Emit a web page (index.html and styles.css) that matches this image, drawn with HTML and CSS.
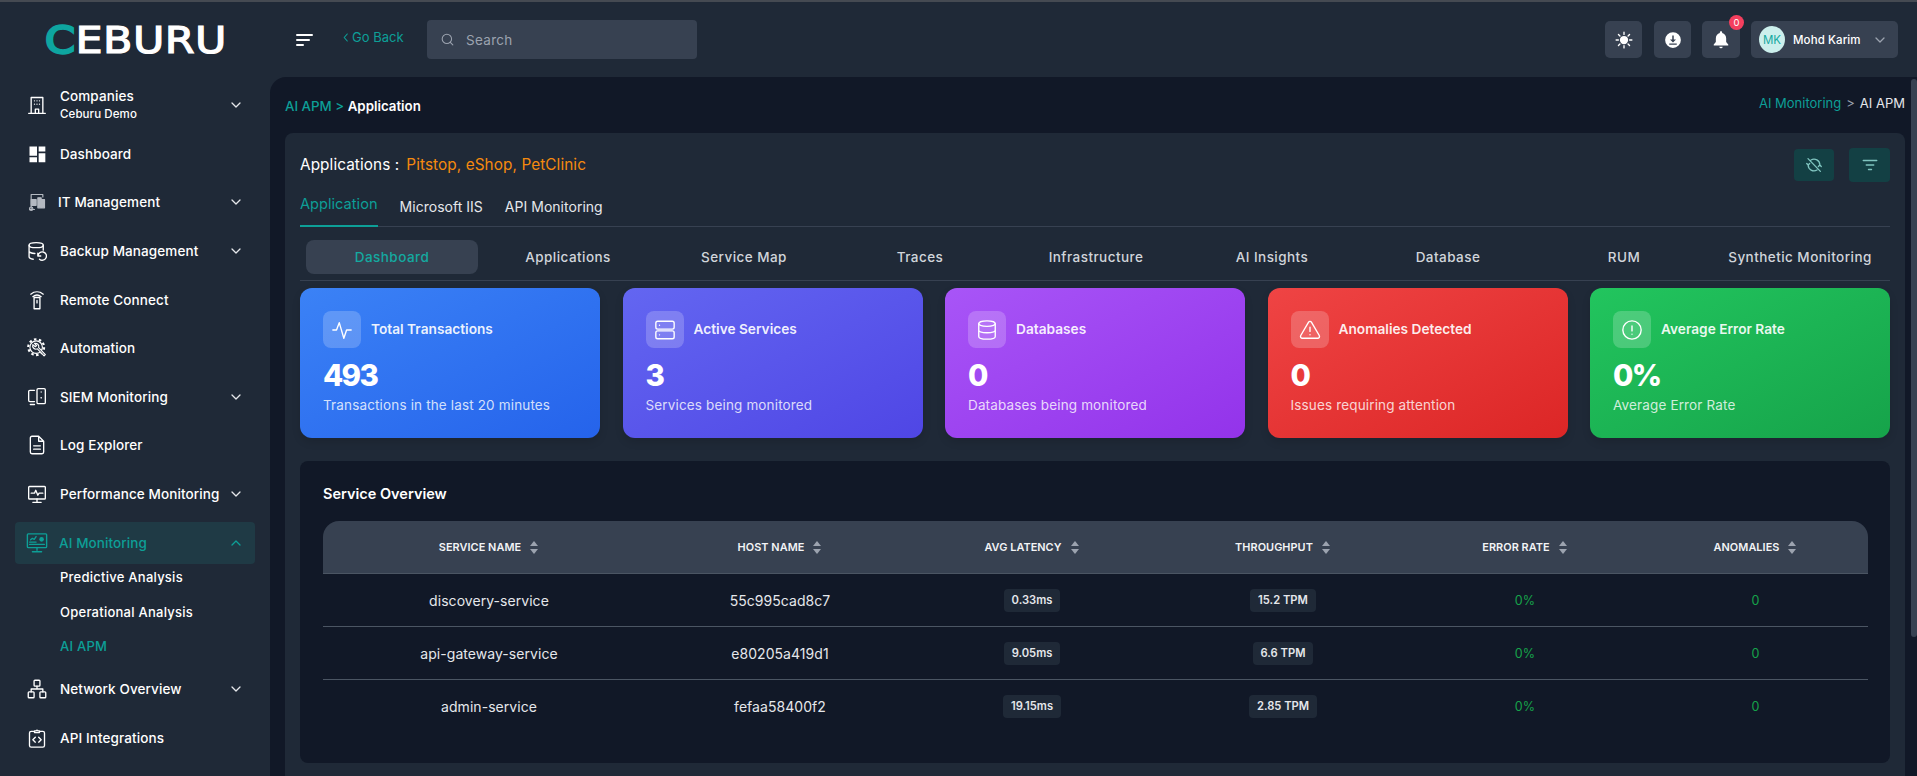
FILE: index.html
```html
<!DOCTYPE html>
<html lang="en">
<head>
<meta charset="utf-8">
<title>AI APM - Application</title>
<link rel="stylesheet" href="styles.css">
</head>
<body>
<div class="app">
  <header class="topbar">
    <div class="logo-cell"><span class="logo"><span class="logo-c">C</span>EBURU</span></div>
    <button class="burger" aria-label="Menu"><i class="b1"></i><i class="b2"></i><i class="b3"></i></button>
    <a class="goback"><svg class="goback-ic" viewBox="0 0 8 12"><path d="M6 2 2.5 6 6 10"/></svg>Go Back</a>
    <div class="search">
      <svg class="search-ic" viewBox="0 0 24 24"><circle cx="11" cy="11" r="7.5"/><path d="m20.5 20.5-4-4"/></svg>
      <span>Search</span>
    </div>
    <div class="top-actions">
      <button class="tbtn tbtn-sun" aria-label="Theme"><svg viewBox="0 0 24 24" class="ic-sun"><circle cx="12" cy="12" r="5.500" class="fill"/><path d="M12 1.500v3M12 19.500v3M1.500 12h3M19.500 12h3M4.600 4.600l2 2M17.400 17.400l2 2M4.600 19.400l2-2M17.400 6.600l2-2"/></svg></button>
      <button class="tbtn" aria-label="Download"><svg viewBox="0 0 24 24"><path class="fill" fill-rule="evenodd" d="M12 1.500a10.500 10.500 0 1 0 0 21 10.500 10.500 0 0 0 0-21Zm-1 4.500h2v5.300h3l-4 4-4-4h3V6ZM7 16.500h10v1.800H7v-1.800Z"/></svg></button>
      <div class="bell-wrap">
        <button class="tbtn tbtn-bell" aria-label="Notifications"><svg viewBox="0 0 24 24"><path class="fill" d="M12 1.500c.8 0 1.400.6 1.400 1.400v.7c3 .7 4.800 3.300 4.800 6.200v4.700l2.500 3v1H3.300v-1l2.500-3V9.800c0-2.900 1.800-5.500 4.800-6.200v-.7c0-.8.6-1.400 1.400-1.400Zm-2 18.500h4a2 2 0 0 1-4 0Z"/></svg></button>
        <span class="badge">0</span>
      </div>
      <div class="user">
        <span class="avatar">MK</span>
        <span class="uname">Mohd Karim</span>
        <svg class="chev chev-user" viewBox="0 0 12 12"><path d="m2 4 4 4 4-4"/></svg>
      </div>
    </div>
  </header>

  <aside class="sidebar">
    <nav class="nav">
      <a class="item">
        <svg class="nic" viewBox="0 0 24 24"><path d="M5 22V3h14v19M2 22h20M10 22v-5h4v5M9 7h.01M12 7h.01M15 7h.01M9 11h.01M12 11h.01M15 11h.01"/></svg>
        <span class="label label-two"><span>Companies</span><small>Ceburu Demo</small></span>
        <svg class="chev" viewBox="0 0 12 12"><path d="m2 4 4 4 4-4"/></svg>
      </a>
      <a class="item">
        <svg class="nic nic-fill" viewBox="0 0 24 24"><path d="M3 3h9v11H3zM14 3h8v6h-8zM14 11h8v11h-8zM3 16h9v6H3z"/></svg>
        <span class="label">Dashboard</span>
      </a>
      <a class="item item-tight">
        <svg class="nic nic-it" viewBox="0 0 24 24"><path d="M5 20V3h14v3M3 21h6"/><path class="nic-it-f" d="M5 9h6v7H5zM13 7h4v12h-4zM18 9h3v10h-3z"/><circle cx="5" cy="20" r="2"/></svg>
        <span class="label">IT Management</span>
        <svg class="chev" viewBox="0 0 12 12"><path d="m2 4 4 4 4-4"/></svg>
      </a>
      <a class="item">
        <svg class="nic" viewBox="0 0 24 24"><ellipse cx="11" cy="5" rx="8.500" ry="3"/><path d="M2.500 5v14c0 1.500 2.500 2.600 5 2.900M19.500 5v6M2.500 12c0 1.500 3 3 7 3"/><path d="M13 14.500v3.500h3.500M13.300 18a5 5 0 1 1 1.700 3.800"/></svg>
        <span class="label">Backup Management</span>
        <svg class="chev" viewBox="0 0 12 12"><path d="m2 4 4 4 4-4"/></svg>
      </a>
      <a class="item">
        <svg class="nic" viewBox="0 0 24 24"><rect x="8.500" y="9" width="7" height="13.500"/><path d="M12 12.500v3M4.500 5c4.500-3.600 10.500-3.600 15 0M7 8c3-2.400 7-2.400 10 0"/></svg>
        <span class="label">Remote Connect</span>
      </a>
      <a class="item">
        <svg class="nic" viewBox="0 0 24 24"><circle class="gear-teeth" cx="11" cy="11" r="9.500"/><circle class="gear-ring" cx="11" cy="11" r="7.500"/><path class="wrench" d="M7 8a4 4 0 0 0 5.500 5l8 8.500 1.500-1.500-8-8.500a4 4 0 0 0-5-5l2.500 2.500-1.500 1.500z"/></svg>
        <span class="label">Automation</span>
      </a>
      <a class="item">
        <svg class="nic" viewBox="0 0 24 24"><path d="M9 4H3.500A1.500 1.500 0 0 0 2 5.500V16a1.500 1.500 0 0 0 1.500 1.500H9M4 21h5"/><rect x="12" y="2" width="10" height="18" rx="1.500"/><path d="M17 6h.01"/><circle cx="17" cy="13" r="1" class="fill"/></svg>
        <span class="label">SIEM Monitoring</span>
        <svg class="chev" viewBox="0 0 12 12"><path d="m2 4 4 4 4-4"/></svg>
      </a>
      <a class="item">
        <svg class="nic" viewBox="0 0 24 24"><path d="M14 1.500H6A2 2 0 0 0 4 3.500v17a2 2 0 0 0 2 2h12a2 2 0 0 0 2-2V7.500zM14 1.500v6h6M8 13h8M8 17h8"/></svg>
        <span class="label">Log Explorer</span>
      </a>
      <a class="item">
        <svg class="nic" viewBox="0 0 24 24"><rect x="2" y="3" width="20" height="15" rx="1"/><path d="M5 11h4l1.500-3.500 2.500 6 1.500-2.500H19M12 18v4M7 22h10"/></svg>
        <span class="label">Performance Monitoring</span>
        <svg class="chev" viewBox="0 0 12 12"><path d="m2 4 4 4 4-4"/></svg>
      </a>
      <a class="item item-active">
        <span class="item-pill">
          <svg class="nic nic-ai" viewBox="0 0 24 24"><rect x="1.500" y="2" width="21" height="15" rx="1"/><path d="M4 13.500h16M4 11h7M5 8.500l2-1.500 2 1 2-3"/><circle cx="17" cy="8" r="2.500" class="fill"/><path d="M12 17v3M7 21.500h10"/></svg>
          <span class="label">AI Monitoring</span>
          <svg class="chev" viewBox="0 0 12 12"><path d="m2 8 4-4 4 4"/></svg>
        </span>
      </a>
      <div class="sub">
        <a class="sub-item">Predictive Analysis</a>
        <a class="sub-item">Operational Analysis</a>
        <a class="sub-item sub-on">AI APM</a>
      </div>
      <a class="item">
        <svg class="nic" viewBox="0 0 24 24"><rect x="8.500" y="1.500" width="7" height="7" rx="1"/><rect x="1.500" y="15.500" width="7" height="7" rx="1"/><rect x="15.500" y="15.500" width="7" height="7" rx="1"/><path d="M12 8.500V12M5 15.500V12h14v3.500"/></svg>
        <span class="label">Network Overview</span>
        <svg class="chev" viewBox="0 0 12 12"><path d="m2 4 4 4 4-4"/></svg>
      </a>
      <a class="item">
        <svg class="nic" viewBox="0 0 24 24"><path d="M8 4H5a2 2 0 0 0-2 2v15a2 2 0 0 0 2 2h14a2 2 0 0 0 2-2V6a2 2 0 0 0-2-2h-3M9 5.500V3.500h2a1 1 0 0 1 2 0h2v2zM10 11l-3 3 3 3M14 11l3 3-3 3"/></svg>
        <span class="label">API Integrations</span>
      </a>
    </nav>
  </aside>

  <main class="main">
    <div class="crumbs">
      <div class="crumb-left"><span class="teal">AI APM</span> <span class="teal">&gt;</span> <b>Application</b></div>
      <div class="crumb-right"><span class="teal">AI Monitoring</span><span class="crumb-sep">&gt;</span><span>AI APM</span></div>
    </div>

    <section class="card">
      <div class="card-head">
        <h1 class="apps">Applications :<span class="apps-list">Pitstop, eShop, PetClinic</span></h1>
        <div class="head-btns">
          <button class="hbtn" aria-label="Sync off"><svg viewBox="0 0 24 24"><path d="M4 3.500l16.500 17M19.800 12A7.800 7.800 0 0 0 8 5.300M4.200 12A7.800 7.800 0 0 0 16 18.700M2.300 10l1.900 2 2-2M21.700 14l-1.900-2-2 2"/></svg></button>
          <button class="hbtn hbtn-filter" aria-label="Filter"><svg viewBox="0 0 24 24"><path d="M3 6h18M7 12h10M10 18h4"/></svg></button>
        </div>
      </div>

      <div class="tabs">
        <a class="tab tab-on">Application</a>
        <a class="tab">Microsoft IIS</a>
        <a class="tab">API Monitoring</a>
      </div>

      <div class="subtabs">
        <a class="stab stab-on">Dashboard</a>
        <a class="stab">Applications</a>
        <a class="stab">Service Map</a>
        <a class="stab">Traces</a>
        <a class="stab">Infrastructure</a>
        <a class="stab">AI Insights</a>
        <a class="stab">Database</a>
        <a class="stab">RUM</a>
        <a class="stab">Synthetic Monitoring</a>
      </div>

      <div class="stats">
        <article class="stat stat-blue">
          <div class="stat-top"><span class="stat-ic"><svg viewBox="0 0 24 24"><path d="M2 12h4l3-8 5 17 3-9h5"/></svg></span><h3>Total Transactions</h3></div>
          <div class="stat-num">493</div>
          <p>Transactions in the last 20 minutes</p>
        </article>
        <article class="stat stat-indigo">
          <div class="stat-top"><span class="stat-ic"><svg viewBox="0 0 24 24"><rect x="2" y="2.500" width="20" height="8.500" rx="2"/><rect x="2" y="13" width="20" height="8.500" rx="2"/><path d="M6 6.750h.01M6 17.250h.01"/></svg></span><h3>Active Services</h3></div>
          <div class="stat-num">3</div>
          <p>Services being monitored</p>
        </article>
        <article class="stat stat-purple">
          <div class="stat-top"><span class="stat-ic"><svg viewBox="0 0 24 24"><ellipse cx="12" cy="5" rx="9" ry="3"/><path d="M3 5v14c0 1.700 4 3 9 3s9-1.300 9-3V5M3 12c0 1.700 4 3 9 3s9-1.300 9-3"/></svg></span><h3>Databases</h3></div>
          <div class="stat-num">0</div>
          <p>Databases being monitored</p>
        </article>
        <article class="stat stat-red">
          <div class="stat-top"><span class="stat-ic"><svg viewBox="0 0 24 24"><path d="M10.300 3.600 1.900 18a2 2 0 0 0 1.700 3h16.800a2 2 0 0 0 1.700-3L13.700 3.600a2 2 0 0 0-3.400 0ZM12 9v4.500M12 17.200h.01"/></svg></span><h3>Anomalies Detected</h3></div>
          <div class="stat-num">0</div>
          <p>Issues requiring attention</p>
        </article>
        <article class="stat stat-green">
          <div class="stat-top"><span class="stat-ic"><svg viewBox="0 0 24 24"><circle cx="12" cy="12" r="10"/><path d="M12 7.500v5.500M12 16.500h.01"/></svg></span><h3>Average Error Rate</h3></div>
          <div class="stat-num">0%</div>
          <p>Average Error Rate</p>
        </article>
      </div>

      <section class="panel">
        <h2 class="panel-title">Service Overview</h2>
        <table class="table">
          <colgroup><col class="c1"><col class="c2"><col class="c3"><col class="c4"><col class="c5"><col class="c6"></colgroup>
          <thead>
            <tr>
              <th>SERVICE NAME<span class="sort"></span></th>
              <th>HOST NAME<span class="sort"></span></th>
              <th>AVG LATENCY<span class="sort"></span></th>
              <th>THROUGHPUT<span class="sort"></span></th>
              <th>ERROR RATE<span class="sort"></span></th>
              <th>ANOMALIES<span class="sort"></span></th>
            </tr>
          </thead>
          <tbody>
            <tr><td>discovery-service</td><td>55c995cad8c7</td><td><span class="pill">0.33ms</span></td><td><span class="pill">15.2 TPM</span></td><td class="ok">0%</td><td class="ok">0</td></tr>
            <tr><td>api-gateway-service</td><td>e80205a419d1</td><td><span class="pill">9.05ms</span></td><td><span class="pill">6.6 TPM</span></td><td class="ok">0%</td><td class="ok">0</td></tr>
            <tr><td>admin-service</td><td>fefaa58400f2</td><td><span class="pill">19.15ms</span></td><td><span class="pill">2.85 TPM</span></td><td class="ok">0%</td><td class="ok">0</td></tr>
          </tbody>
        </table>
      </section>
    </section>
    <div class="scroll-thumb"></div>
  </main>
</div>
</body>
</html>
```

FILE: styles.css
```css
* { box-sizing: border-box; }
html, body { margin: 0; height: 100%; overflow: hidden; }
body {
  background: #1f2937;
  color: #fff;
  font-family: Inter, "Open Sans", "Liberation Sans", sans-serif;
  font-size: 14px;
}
a { color: inherit; text-decoration: none; }
button { border: 0; padding: 0; font: inherit; color: inherit; background: none; }
h1, h2, h3, p { margin: 0; font-weight: inherit; font-size: inherit; }
svg { display: block; fill: none; stroke: currentColor; stroke-width: 2; stroke-linecap: round; stroke-linejoin: round; }
svg .fill { fill: currentColor; stroke: none; }

.app {
  height: 776px;
  border-top: 2px solid #454a52;
  display: grid;
  grid-template-columns: 270px 1fr;
  grid-template-rows: 75px 1fr;
}

/* top bar */
.topbar { grid-column: 1 / -1; display: flex; align-items: center; padding-right: 19px; }
.logo-cell { width: 296px; padding-left: 45px; flex: none; }
.logo {
  font-family: "DejaVu Sans", sans-serif;
  font-size: 38px;
  line-height: 1;
  letter-spacing: .4px;
  color: #fff;
  -webkit-text-stroke: 1.200px #fff;
  display: block;
  width: 181px;
  white-space: nowrap;
  transform: scaleX(1.130);
  transform-origin: left center;
  margin-top: 0;
}
.logo-c { color: #0ea5a0; -webkit-text-stroke: 2.400px #0ea5a0; }
.burger { width: 17px; display: flex; flex-direction: column; gap: 3px; margin-top: 1px; flex: none; }
.burger i { display: block; height: 2px; background: #fff; border-radius: 1px; }
.b1 { width: 17px; } .b2 { width: 14px; } .b3 { width: 8px; }
.goback {
  margin-left: 29px; width: 85px; flex: none;
  display: flex; align-items: center; gap: 3px;
  color: #0d9f97; font-size: 13px; margin-top: -5px;
}
.goback-ic { width: 7px; height: 11px; stroke-width: 1.300; }
.search {
  width: 270px; height: 39px; flex: none;
  background: #374151; border-radius: 4px;
  display: flex; align-items: center; padding: 0 13px;
  gap: 11px; color: #9ca3af; font-size: 13.500px; letter-spacing: .3px;
}
.search-ic { width: 15px; height: 15px; stroke-width: 1.700; }
.top-actions { margin-left: auto; display: flex; align-items: center; }
.tbtn {
  width: 37px; height: 37px; background: #374151; border-radius: 5px;
  display: flex; align-items: center; justify-content: center; margin-right: 11px;
}
.tbtn-sun { margin-right: 12px; }
.tbtn svg { width: 18px; height: 18px; }
.ic-sun { stroke-width: 1.800; }
.bell-wrap { position: relative; margin-right: 11px; }
.tbtn-bell { width: 38px; margin-right: 0; }
.tbtn-bell svg { width: 20px; height: 20px; }
.badge {
  position: absolute; top: -6px; right: -4px;
  width: 15px; height: 15px; border-radius: 50%;
  background: #f43f5e; font-size: 9.500px; line-height: 15px; text-align: center;
}
.user {
  width: 147px; height: 37px; background: #374151; border-radius: 5px;
  display: flex; align-items: center; padding-left: 8px;
}
.avatar {
  width: 26px; height: 27px; border-radius: 50%; flex: none;
  background: #ccefec; color: #14a9a0; font-size: 11.500px;
  display: flex; align-items: center; justify-content: center;
}
.uname { margin-left: 8px; font-size: 11.500px; font-weight: 500; letter-spacing: .1px; }
.chev { width: 12px; height: 12px; color: #e5e7eb; stroke-width: 1.300; flex: none; }
.chev-user { margin-left: auto; margin-right: 12px; color: #9ca3af; }

/* sidebar */
.sidebar { overflow: hidden; }
.nav { padding: 4px 0 0; }
.item {
  height: 48.600px; padding: 0 28px 0 27px;
  display: flex; align-items: center;
  font-size: 13.500px; font-weight: 500; letter-spacing: .1px;
}
.nic { width: 20px; height: 20px; flex: none; margin-right: 13px; stroke-width: 1.600; }
.nic-fill { fill: currentColor; stroke: none; }
.nic-it { color: #b4b9c1; stroke-width: 1.400; margin-right: 11px; }
.nic-it-f { fill: currentColor; }
.gear-teeth { stroke-width: 2.600; stroke-dasharray: 3 2.970; stroke-linecap: butt; }
.gear-ring { stroke-width: 1.400; }
.wrench { fill: #1f2937; stroke-width: 1.400; }
.label { flex: 1; min-width: 0; white-space: nowrap; }
.label-two { display: flex; flex-direction: column; gap: 2px; line-height: 16px; margin-top: -1px; }
.label-two small { font-size: 11.500px; }
.item-active { padding: 0 15px; }
.item-pill {
  flex: 1; height: 42px; background: #1f3a45; border-radius: 4px;
  display: flex; align-items: center; padding: 0 13px 0 11px; color: #0d9f97;
}
.item-pill .chev { color: #0d9f97; }
.nic-ai { width: 22px; height: 22px; margin-right: 11px; stroke-width: 1.500; }
.sub { padding-left: 60px; margin: -7px 0 2px; }
.sub-item { display: flex; align-items: center; height: 34.400px; font-size: 13px; font-weight: 500; letter-spacing: .25px; }
.sub-on { color: #0d9f97; }

/* main */
.main {
  position: relative; overflow: hidden;
  background: #111827; border-top-left-radius: 16px;
  padding: 0 12px 0 15px;
}
.crumbs { height: 56px; display: flex; align-items: center; justify-content: space-between; font-size: 13.300px; }
.crumb-left { font-weight: 500; margin-top: 2px; }
.crumb-left b { font-weight: 600; }
.teal { color: #0d9f97; }
.crumb-right { display: flex; align-items: center; color: #e5e7eb; margin-top: -4px; font-size: 13px; }
.crumb-sep { margin: 0 5px; color: #9ca3af; }
.scroll-thumb { position: absolute; top: 2px; right: 0; width: 6px; height: 558px; border-radius: 3px; background: #374151; }

.card { background: #1f2937; border-radius: 8px; padding: 15px 15px 30px; }
.card-head { height: 34px; display: flex; align-items: center; justify-content: space-between; }
.apps { font-size: 15.300px; font-weight: 400; letter-spacing: .1px; margin-top: -2px; }
.apps-list { color: #f5890e; margin-left: 7px; }
.head-btns { display: flex; align-items: center; gap: 15px; }
.hbtn { width: 40px; height: 32px; background: #134044; border-radius: 4px; display: flex; align-items: center; justify-content: center; color: #7fc4bf; }
.hbtn svg { width: 18px; height: 18px; stroke-width: 1.800; }
.hbtn-filter { width: 41px; height: 34px; }
.tabs { height: 45px; display: flex; gap: 22px; border-bottom: 1px solid #374151; }
.tab { display: flex; align-items: center; height: 45px; padding-top: 3px; font-size: 14px; letter-spacing: .02px; color: #e5e7eb; }
.tab-on { color: #0d9f97; font-size: 14.600px; border-bottom: 2px solid #0d9f97; padding-top: 1px; }
.subtabs {
  display: flex; gap: 4px; padding: 13px 4px 6px 6px;
  border-bottom: 1px solid #374151;
}
.stab {
  flex: 1; height: 34px; border-radius: 8px; color: #d1d5db;
  display: flex; align-items: center; justify-content: center;
  font-size: 13.500px; font-weight: 500; letter-spacing: .45px; white-space: nowrap;
}
.stab-on { background: #374151; color: #14a9a0; }

.stats { margin-top: 7px; display: grid; grid-template-columns: repeat(5, 1fr); gap: 22.500px; }
.stat { height: 150px; padding: 23px 23px 0; border-radius: 12px; box-shadow: 0 4px 8px rgba(0,0,0,.12); }
.stat-blue { background: linear-gradient(to bottom right, #3b82f6, #2563eb); }
.stat-indigo { background: linear-gradient(to bottom right, #6366f1, #4f46e5); }
.stat-purple { background: linear-gradient(to bottom right, #a855f7, #9333ea); }
.stat-red { background: linear-gradient(to bottom right, #ef4444, #dc2626); }
.stat-green { background: linear-gradient(to bottom right, #22c55e, #16a34a); }
.stat-top { display: flex; align-items: center; gap: 10px; }
.stat-ic { width: 38px; height: 37px; border-radius: 8px; background: rgba(255,255,255,.2); display: flex; align-items: center; justify-content: center; }
.stat-ic svg { width: 22px; height: 22px; stroke-width: 1.500; }
.stat h3 { font-size: 13.700px; font-weight: 600; color: rgba(255,255,255,.92); margin-top: -2px; }
.stat-num { margin-top: 9px; height: 36px; line-height: 36px; font-size: 29.500px; font-weight: 800; letter-spacing: -1.700px; }
.stat p { margin-top: 2px; font-size: 13.500px; line-height: 20px; color: rgba(255,255,255,.8); letter-spacing: .15px; }

.panel { margin-top: 23px; background: #111827; border-radius: 8px; padding: 22px 22px 30px 23px; }
.panel-title { font-size: 14.500px; font-weight: 600; line-height: 22px; margin-bottom: 16px; }
.table { width: 100%; table-layout: fixed; border-collapse: separate; border-spacing: 0; }
.c1 { width: 332px; } .c2 { width: 250px; } .c3 { width: 254px; }
.c4 { width: 248px; } .c5 { width: 236px; } .c6 { width: 225px; }
.table th {
  height: 53px; padding: 0; background: #374151; border-bottom: 1px solid #4b5563;
  font-size: 10.900px; font-weight: 600; color: #f3f4f6; letter-spacing: .05px;
}
.table th:first-child { border-top-left-radius: 16px; }
.table th:last-child { border-top-right-radius: 16px; }
.table td {
  height: 53px; padding: 0; text-align: center; border-bottom: 1px solid #4b5563;
  font-size: 14px; letter-spacing: .05px; color: #e5e7eb;
}
.table tbody tr:last-child td { border-bottom: 0; }
.table td.ok { color: #16a34a; font-size: 12.500px; }
.sort { display: inline-block; width: 9px; height: 13px; margin-left: 9px; vertical-align: middle; position: relative; }
.sort::before, .sort::after {
  content: ""; position: absolute; left: 0; width: 0; height: 0;
  border-left: 4.500px solid transparent; border-right: 4.500px solid transparent;
}
.sort::before { top: 0; border-bottom: 5.500px solid #9ca3af; }
.sort::after { bottom: 0; border-top: 5.500px solid #9ca3af; }
.pill {
  display: inline-block; padding: 0 8px; height: 23px; line-height: 23px;
  background: #1f2937; border-radius: 4px; font-size: 11.200px; font-weight: 600; letter-spacing: 0; color: #e5e7eb;
}
```
